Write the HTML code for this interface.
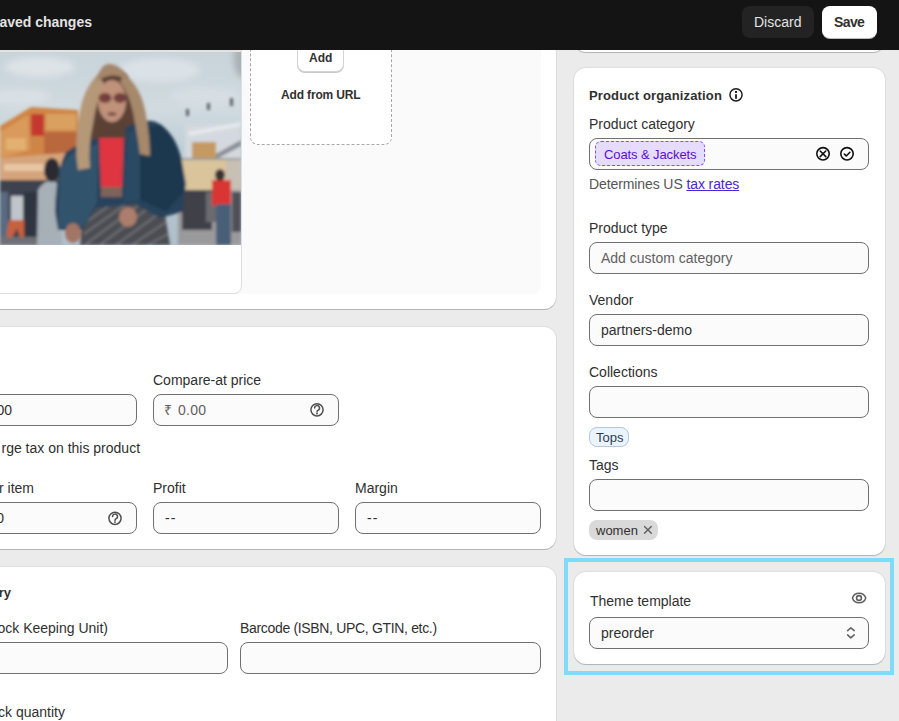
<!DOCTYPE html>
<html><head><meta charset="utf-8">
<style>
*{box-sizing:border-box;margin:0;padding:0}
html,body{width:899px;height:721px;overflow:hidden}
body{background:#ebebeb;font-family:"Liberation Sans",sans-serif;color:#303030;position:relative}
.a{position:absolute}
.t{position:absolute;white-space:nowrap;font-size:14px;line-height:16px;color:#303030}
.card{position:absolute;background:#fff;border-radius:12px;box-shadow:0 1px 0 rgba(0,0,0,.1),0 1px 1px rgba(0,0,0,.1),0 0 0 1px rgba(0,0,0,.05)}
.inp{position:absolute;height:32px;border:1px solid #707070;border-radius:8px;background:#fbfbfb}
.ic{position:absolute}
</style></head>
<body>

<!-- right hidden card -->
<div class="card" style="left:574px;top:-40px;width:311px;height:92px"></div>

<!-- left card 1 (media) -->
<div class="card" style="left:-64px;top:-40px;width:620px;height:349px"></div>
<div class="a" style="left:-49px;top:40px;width:590px;height:254px;background:#fafafa;border-radius:8px"></div>
<div class="a" style="left:-60px;top:40px;width:302px;height:254px;background:#fff;border:1px solid #dedede;border-radius:8px"></div>
<div class="a" style="left:0;top:50px;width:241px;height:2px;background:#e2e2e2"></div>
<div class="a" id="photo" style="left:0;top:52px;width:241px;height:193px;overflow:hidden"><svg width="241" height="193" viewBox="0 0 241 193">
<defs>
<linearGradient id="sky" x1="0" y1="0" x2="0" y2="1">
<stop offset="0" stop-color="#c8d3da"/><stop offset="0.3" stop-color="#d0dadf"/><stop offset="0.5" stop-color="#bfced8"/><stop offset="0.7" stop-color="#b4c5d2"/><stop offset="1" stop-color="#b0bfca"/>
</linearGradient>
<filter id="bl" x="-5%" y="-5%" width="110%" height="110%"><feGaussianBlur stdDeviation="1.6"/></filter>
<filter id="bl2" x="-20%" y="-20%" width="140%" height="140%"><feGaussianBlur stdDeviation="3"/></filter>
</defs>
<rect width="241" height="193" fill="url(#sky)"/>
<g filter="url(#bl2)">
<ellipse cx="40" cy="15" rx="35" ry="10" fill="#dde3e7"/>
<ellipse cx="160" cy="18" rx="40" ry="12" fill="#dbe2e7"/>
<ellipse cx="205" cy="45" rx="35" ry="10" fill="#d6dee4"/>
<ellipse cx="20" cy="45" rx="30" ry="8" fill="#d9e0e5"/>
<ellipse cx="243" cy="6" rx="9" ry="20" fill="#a9afb3"/>
</g>
<g filter="url(#bl)">
<!-- booth left -->
<polygon points="0,74 31,55 78,58 80,128 0,134" fill="#cf8546"/>
<polygon points="0,80 28,63 30,98 0,106" fill="#d99a5c"/>
<rect x="31" y="62" width="13" height="22" fill="#c5392e"/>
<rect x="46" y="62" width="30" height="16" fill="#d9a060"/>
<rect x="44" y="80" width="34" height="22" fill="#b9683c"/>
<rect x="6" y="86" width="20" height="12" fill="#e2b070"/>
<polygon points="0,106 78,100 80,128 0,134" fill="#d6a47c"/>
<rect x="4" y="112" width="56" height="7" fill="#e6c6a2"/>
<!-- crowd left -->
<rect x="0" y="128" width="62" height="65" fill="#3d4350"/>
<rect x="0" y="140" width="8" height="45" fill="#5a6a80"/>
<rect x="11" y="144" width="12" height="26" fill="#c0c5cb"/>
<path d="M9,168 L26,168 L28,186 L20,186 L17,176 L12,186 L6,186 Z" fill="#c8603e"/>
<rect x="24" y="140" width="14" height="45" fill="#2e3440"/>
<rect x="0" y="185" width="62" height="8" fill="#6e7074"/>
<!-- gray person -->
<path d="M37,193 L38,138 Q44,128 54,128 L62,138 L62,193 Z" fill="#a7afb7"/>
<ellipse cx="52" cy="118" rx="8" ry="12" fill="#2a2a30"/>
<!-- right background -->
<rect x="185" y="72" width="56" height="40" fill="#d3d9de"/>
<polygon points="188,80 241,70 241,74 189,84" fill="#e6e9ec"/>
<polygon points="205,108 241,88 241,94 207,112" fill="#8a8e94"/>
<rect x="192" y="90" width="24" height="18" fill="#c49a62"/>
<rect x="178" y="106" width="63" height="87" fill="#9a9a9c"/>
<rect x="180" y="108" width="46" height="32" fill="#d9c49c"/>
<rect x="226" y="108" width="15" height="30" fill="#c8c0b4"/>
<rect x="182" y="138" width="30" height="40" fill="#404148"/>
<rect x="206" y="140" width="10" height="30" fill="#6a6a70"/>
<rect x="212" y="128" width="19" height="26" fill="#d93433"/>
<ellipse cx="220" cy="123" rx="5" ry="6" fill="#3a3030"/>
<rect x="216" y="152" width="15" height="41" fill="#4a5e78"/>
<rect x="232" y="140" width="9" height="40" fill="#505058"/>
<rect x="186" y="57" width="3" height="7" fill="#5a6068"/>
<rect x="207" y="51" width="3" height="7" fill="#5a6068"/>
<rect x="230" y="46" width="3" height="8" fill="#5a6068"/>
<!-- hair back -->
<path d="M86,100 Q82,60 92,34 Q100,14 112,14 Q128,16 134,38 Q142,62 144,100 Z" fill="#5c4236"/>
<!-- skirt -->
<path d="M84,153 L163,150 L170,193 L80,193 Z" fill="#4c4d52"/>
<g stroke="#8e8e92" stroke-width="1.2" opacity="0.8">
<path d="M86,160 L100,150 M86,170 L112,152 M84,182 L126,152 M86,192 L140,152 M100,193 L154,152 M116,193 L164,158 M132,193 L166,170 M148,193 L168,182"/>
</g>
<!-- jacket -->
<path d="M55,160 Q56,118 66,100 Q80,90 98,86 L128,74 Q146,66 156,70 Q176,80 182,110 L186,132 L182,160 L160,166 L135,152 L96,156 L82,178 L58,178 Z" fill="#28435c"/>
<path d="M60,118 Q68,100 84,96 L98,92 L97,150 L84,174 L58,176 Z" fill="#33526c"/>
<path d="M140,78 L160,72 Q176,84 182,110 L184,140 L166,160 L140,148 Z" fill="#1f3850"/>
<path d="M128,80 L140,78 L140,148 L124,150 Z" fill="#2c4a64"/>
<!-- red top -->
<path d="M99,82 L124,80 L122,136 L101,137 Z" fill="#df3441"/>
<rect x="101" y="135" width="21" height="10" fill="#7e6458"/>
<!-- hair front strands -->
<path d="M98,22 Q82,38 79,66 Q74,94 78,118 L90,116 Q88,94 93,72 Q96,50 104,32 Z" fill="#b59878"/>
<path d="M124,22 Q140,34 145,58 Q150,84 150,104 L140,102 Q137,80 133,60 Q129,42 120,30 Z" fill="#a6886a"/>
<path d="M96,30 Q100,13 108,12 Q122,12 128,28 Q118,22 108,24 Q100,26 96,30 Z" fill="#a5866a"/>
<!-- face -->
<ellipse cx="112" cy="49" rx="14" ry="21" fill="#c0927a"/>
<ellipse cx="105" cy="46" rx="6.5" ry="5" fill="#73403a"/>
<ellipse cx="120" cy="46" rx="6.5" ry="5" fill="#73403a"/>
<ellipse cx="112" cy="62" rx="4.5" ry="2" fill="#80504a"/>
<path d="M100,68 Q112,76 124,68 L126,86 L98,86 Z" fill="#5a4034"/>
<!-- hands -->
<ellipse cx="73" cy="181" rx="8" ry="10" fill="#a37565"/>
<ellipse cx="128" cy="165" rx="9" ry="10" fill="#ac7e6c"/>
</g>
</svg></div>
<div class="a" style="left:250px;top:20px;width:142px;height:125px;border:1px dashed #a8a8a8;border-radius:8px;background:#fff"></div>
<div class="a" style="left:297px;top:40px;width:47px;height:32px;border:1px solid #d4d4d4;border-radius:8px;background:#fff;box-shadow:0 1px 0 #c9c9c9"></div>
<div class="t" style="left:309px;top:50px;font-size:12px;font-weight:bold">Add</div>
<div class="t" style="left:281px;top:87px;font-size:12px;font-weight:bold;letter-spacing:-0.15px">Add from URL</div>

<!-- left card 2 (pricing) -->
<div class="card" style="left:-64px;top:327px;width:620px;height:222px"></div>
<div class="t" style="left:153px;top:372px">Compare-at price</div>
<div class="inp" style="left:-49px;top:394px;width:186px"></div>
<div class="t" style="right:887px;top:402px">0.00</div>
<div class="inp" style="left:153px;top:394px;width:186px"></div>
<div class="t" style="left:164px;top:402px;color:#616161">₹</div>
<div class="t" style="left:178px;top:402px;color:#616161;letter-spacing:0.3px">0.00</div>
<div class="t" style="left:1.5px;top:440px">rge tax on this product</div>
<div class="t" style="right:865px;top:480px">Cost per item</div>
<div class="t" style="left:153px;top:480px">Profit</div>
<div class="t" style="left:355px;top:480px">Margin</div>
<div class="inp" style="left:-49px;top:502px;width:186px"></div>
<div class="t" style="right:895px;top:510px">0.00</div>
<div class="inp" style="left:153px;top:502px;width:186px"></div>
<div class="t" style="left:165px;top:510px;letter-spacing:1px">--</div>
<div class="inp" style="left:355px;top:502px;width:186px"></div>
<div class="t" style="left:367px;top:510px;letter-spacing:1px">--</div>

<!-- left card 3 (inventory) -->
<div class="card" style="left:-64px;top:567px;width:620px;height:300px"></div>
<div class="t" style="right:888px;top:585px;font-weight:bold;font-size:13px">Inventory</div>
<div class="t" style="right:791px;top:620px">SKU (Stock Keeping Unit)</div>
<div class="t" style="left:240px;top:620px;letter-spacing:-0.33px">Barcode (ISBN, UPC, GTIN, etc.)</div>
<div class="inp" style="left:-49px;top:642px;width:277px"></div>
<div class="inp" style="left:240px;top:642px;width:301px"></div>
<div class="t" style="right:834px;top:704px">Stock quantity</div>

<!-- right card B -->
<div class="card" style="left:574px;top:68px;width:311px;height:487px"></div>
<div class="t" style="left:589px;top:88px;font-weight:bold;font-size:13px;letter-spacing:0.15px">Product organization</div>
<div class="t" style="left:589px;top:116px">Product category</div>
<div class="inp" style="left:589px;top:138px;width:280px"></div>
<div class="a" style="left:595px;top:141px;width:110px;height:25px;background:#e5dcff;border:1px dashed #8051ff;border-radius:6px"></div>
<div class="t" style="left:604px;top:146.5px;font-size:13px;color:#5a0fd0;letter-spacing:-0.1px">Coats &amp; Jackets</div>
<div class="t" style="left:589px;top:176px;color:#555;letter-spacing:-0.1px">Determines US <span style="color:#4a24d6;text-decoration:underline">tax rates</span></div>
<div class="t" style="left:589px;top:220px">Product type</div>
<div class="inp" style="left:589px;top:242px;width:280px"></div>
<div class="t" style="left:601px;top:250px;color:#616161">Add custom category</div>
<div class="t" style="left:589px;top:292px">Vendor</div>
<div class="inp" style="left:589px;top:314px;width:280px"></div>
<div class="t" style="left:601px;top:322px">partners-demo</div>
<div class="t" style="left:589px;top:364px">Collections</div>
<div class="inp" style="left:589px;top:386px;width:280px"></div>
<div class="a" style="left:589px;top:427px;width:40px;height:20px;background:#eaf4ff;border:1px solid #b5c7d9;border-radius:8px"></div>
<div class="t" style="left:596px;top:430px;font-size:13px;color:#2e3d4a">Tops</div>
<div class="t" style="left:589px;top:457px">Tags</div>
<div class="inp" style="left:589px;top:479px;width:280px"></div>
<div class="a" style="left:589px;top:520px;width:69px;height:20px;background:#d9d9d9;border-radius:8px"></div>
<div class="t" style="left:596px;top:523px;font-size:13px">women</div>

<!-- cyan highlight -->
<div class="a" style="left:564px;top:558px;width:330px;height:117px;border:4px solid #80dbfa"></div>
<div class="card" style="left:574px;top:572px;width:311px;height:92px"></div>
<div class="t" style="left:590px;top:593px">Theme template</div>
<div class="inp" style="left:589px;top:617px;width:280px"></div>
<div class="t" style="left:601px;top:625px">preorder</div>


<!-- icons -->
<svg class="ic" style="left:307px;top:400px" width="20" height="20" viewBox="0 0 20 20"><circle cx="10" cy="9.8" r="6.1" fill="none" stroke="#4f4f4f" stroke-width="1.5"/><path d="M7.6,8.1 a2.45,2.45 0 1 1 3.6,2.1 c-0.7,0.4 -1.2,0.8 -1.2,1.7" fill="none" stroke="#4f4f4f" stroke-width="1.5" stroke-linecap="round"/><circle cx="10" cy="13.6" r="0.95" fill="#4f4f4f"/></svg>
<svg class="ic" style="left:105px;top:508px" width="20" height="20" viewBox="0 0 20 20"><circle cx="10" cy="10.3" r="6.1" fill="none" stroke="#4f4f4f" stroke-width="1.5"/><path d="M7.6,8.6 a2.45,2.45 0 1 1 3.6,2.1 c-0.7,0.4 -1.2,0.8 -1.2,1.7" fill="none" stroke="#4f4f4f" stroke-width="1.5" stroke-linecap="round"/><circle cx="10" cy="14.1" r="0.95" fill="#4f4f4f"/></svg>
<svg class="ic" style="left:726px;top:85px" width="20" height="20" viewBox="0 0 20 20"><circle cx="10" cy="9.8" r="6.1" fill="none" stroke="#1e1e1e" stroke-width="1.5"/><rect x="9" y="6" width="2" height="1.9" fill="#1e1e1e"/><rect x="9" y="9.3" width="2" height="4.5" fill="#303030"/></svg>
<svg class="ic" style="left:813px;top:144px" width="44" height="20" viewBox="0 0 44 20"><circle cx="10" cy="9.8" r="6.2" fill="none" stroke="#111" stroke-width="1.6"/><path d="M7.2,7 L12.8,12.6 M12.8,7 L7.2,12.6" stroke="#111" stroke-width="1.6" stroke-linecap="round"/><circle cx="34" cy="9.8" r="6.2" fill="none" stroke="#111" stroke-width="1.6"/><path d="M31.4,10.1 L33.3,12 L36.9,8.3" fill="none" stroke="#111" stroke-width="1.6" stroke-linecap="round" stroke-linejoin="round"/></svg>
<svg class="ic" style="left:849px;top:588px" width="20" height="20" viewBox="0 0 20 20"><path d="M3.4,10 C5.6,3.6 14.6,3.6 16.8,10 C14.6,16.4 5.6,16.4 3.4,10 Z" fill="none" stroke="#5f5f5f" stroke-width="1.5" stroke-linejoin="round"/><circle cx="10" cy="10" r="2.4" fill="none" stroke="#5f5f5f" stroke-width="1.6"/></svg>
<svg class="ic" style="left:841px;top:623px" width="20" height="20" viewBox="0 0 20 20"><path d="M6.6,7.6 L9.8,4.8 L13.2,7.6 M6.6,11.9 L9.8,14.9 L13.2,11.9" fill="none" stroke="#5f5f5f" stroke-width="1.5" stroke-linecap="round" stroke-linejoin="round"/></svg>
<svg class="ic" style="left:638px;top:520px" width="20" height="20" viewBox="0 0 20 20"><path d="M6.5,6.5 L13.3,13.3 M13.3,6.5 L6.5,13.3" stroke="#5f5f5f" stroke-width="1.4" stroke-linecap="round"/></svg>

<!-- top bar -->
<div class="a" style="left:0;top:0;width:899px;height:50px;background:#141414"></div>
<div class="t" style="right:807px;top:14px;font-weight:bold;color:#e3e3e3">Unsaved changes</div>
<div class="a" style="left:742px;top:6px;width:72px;height:32px;background:#232323;border-radius:8px"></div>
<div class="t" style="left:754px;top:14px;color:#e3e3e3">Discard</div>
<div class="a" style="left:822px;top:6px;width:55px;height:32px;background:#fff;border-radius:8px;box-shadow:0 1px 0 #bbb"></div>
<div class="t" style="left:834px;top:14px;font-weight:bold;color:#303030;letter-spacing:-0.6px">Save</div>

</body></html>
